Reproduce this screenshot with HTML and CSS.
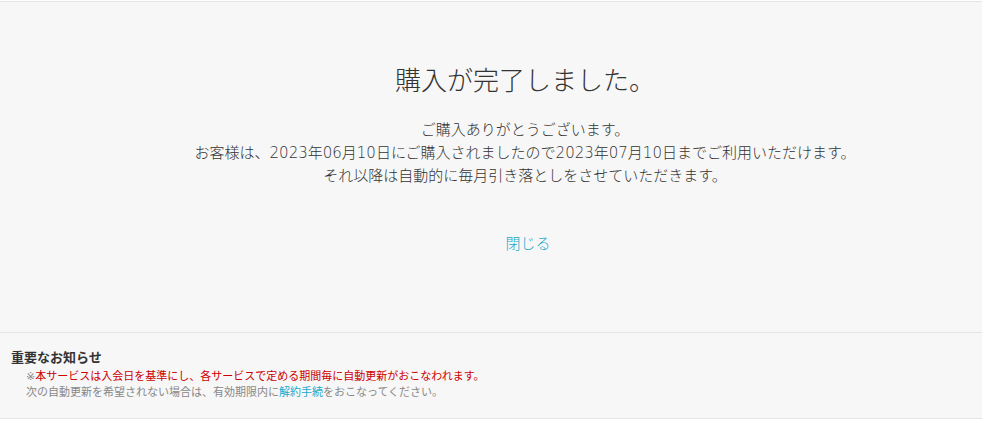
FILE: index.html
```html
<!DOCTYPE html>
<html lang="ja">
<head>
<meta charset="utf-8">
<title>購入完了</title>
<link rel="stylesheet" href="styles.css">
</head>
<body>
<div class="page">
  <section class="complete">
    <h1 class="complete-title">購入が完了しました。</h1>
    <p class="complete-text">ご購入ありがとうございます。<br>お客様は、2023年06月10日にご購入されましたので2023年07月10日までご利用いただけます。<br>それ以降は自動的に毎月引き落としをさせていただきます。</p>
    <a class="close-link" href="#">閉じる</a>
  </section>
  <section class="notice">
    <h2 class="notice-title">重要なお知らせ</h2>
    <ul class="notice-list">
      <li><span class="mark">※</span><span class="warn">本サービスは入会日を基準にし、各サービスで定める期間毎に自動更新がおこなわれます。</span></li>
      <li>次の自動更新を希望されない場合は、有効期限内に<a class="link" href="#">解約手続</a>をおこなってください。</li>
    </ul>
  </section>
</div>
</body>
</html>
```
FILE: styles.css
```css
html, body {
  margin: 0;
  padding: 0;
  background: #ffffff;
}
body {
  font-family: "DejaVu Sans", "Noto Sans CJK JP", sans-serif;
  color: #333333;
}
.page {
  margin-top: 1px;
  border-top: 1px solid #e4e4e4;
}
.complete {
  background: #f7f7f7;
  text-align: center;
  padding: 59px 0 77px 68px;
  display: flex;
  flex-direction: column;
  align-items: center;
  height: 330px;
  box-sizing: border-box;
}
.complete-title {
  margin: 0;
  font-family: "Noto Sans CJK JP", sans-serif;
  font-weight: 300;
  font-size: 26px;
  line-height: 36px;
  color: #333333;
}
.complete-text {
  margin: 22px 0 0;
  font-size: 15px;
  line-height: 23px;
  font-weight: 300;
  color: #333333;
}
.close-link {
  margin-top: 43px;
  font-size: 15px;
  line-height: 23px;
  font-weight: 300;
  color: #1ba8cc;
  text-decoration: none;
  font-family: "Noto Sans CJK JP", sans-serif;
  margin-left: 6px;
}
.notice {
  background: #f7f7f7;
  border-top: 1px solid #e4e4e4;
  border-bottom: 1px solid #e4e4e4;
  padding: 14px 11px 17px;
}
.notice-title {
  margin: 0;
  font-size: 13px;
  font-weight: 700;
  line-height: 20px;
  color: #333333;
  font-family: "Noto Sans CJK JP", sans-serif;
}
.notice-list {
  list-style: none;
  margin: 2px 0 0;
  padding: 0 0 0 15px;
  font-size: 11px;
  line-height: 16px;
  color: #888888;
}
.notice-list .warn {
  color: #cc0000;
}
.notice-list .link {
  color: #1ba8cc;
  text-decoration: none;
}
```
